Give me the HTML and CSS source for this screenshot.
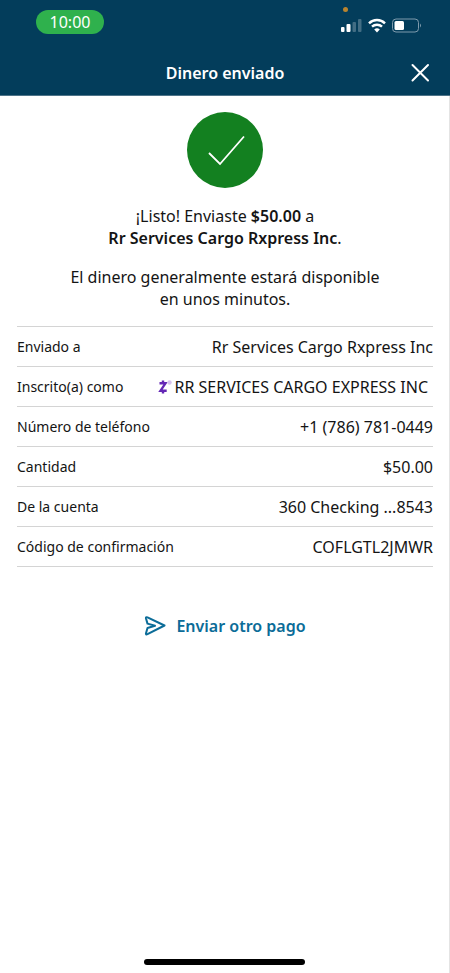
FILE: index.html
```html
<!DOCTYPE html>
<html lang="es">
<head>
<meta charset="utf-8">
<meta name="viewport" content="width=device-width, initial-scale=1">
<title>Dinero enviado</title>
<link rel="stylesheet" href="styles.css">
</head>
<body>
<header class="top">
  <div class="status">
    <span class="clock">10:00</span>
    <svg class="indicators" width="84" height="32" viewBox="0 0 84 32" aria-hidden="true">
      <circle cx="7.500" cy="5.500" r="2.500" fill="#b9842f"/>
      <g fill="#fff">
        <rect x="3" y="23" width="3.500" height="5" rx="1"/>
        <rect x="8.500" y="20" width="4" height="8" rx="1"/>
        <rect x="14.500" y="18" width="3.500" height="10" rx="1" opacity=".25"/>
        <rect x="20" y="15" width="3.500" height="13" rx="1" opacity=".25"/>
      </g>
      <g fill="none" stroke="#fff" stroke-width="2.400">
        <path d="M31 19.300a11.200 11.200 0 0 1 16 0"/>
        <path d="M34 22.700a7.200 7.200 0 0 1 10 0"/>
      </g>
      <path d="M36.200 25.600a4.200 4.200 0 0 1 5.600 0L39 28.400z" fill="#fff"/>
      <rect x="54.500" y="15" width="26" height="13" rx="3.500" fill="none" stroke="#7f9bad"/>
      <rect x="56.500" y="17" width="9.500" height="9" rx="1.500" fill="#fff"/>
      <path d="M82 19.500q2 2 0 4z" fill="#7f9bad"/>
    </svg>
  </div>
  <div class="titlebar">
    <h1>Dinero enviado</h1>
    <button class="close" type="button" aria-label="Cerrar">
      <svg width="20" height="20" viewBox="0 0 20 20" aria-hidden="true"><path d="M2.500 2l15.500 15.500M18 2L2.500 17.500" stroke="#fff" stroke-width="2" stroke-linecap="round"/></svg>
    </button>
  </div>
</header>
<main>
  <svg class="check" width="76" height="76" viewBox="0 0 76 76" aria-hidden="true">
    <circle cx="38" cy="38" r="38" fill="#138020"/>
    <path d="M22 41l11 11 24-27.500" fill="none" stroke="#fff" stroke-width="1.800"/>
  </svg>
  <p>¡Listo! Enviaste <strong>$50.00</strong> a<br><strong>Rr Services Cargo Rxpress Inc</strong>.</p>
  <p>El dinero generalmente estará disponible<br>en unos minutos.</p>
  <table>
    <tbody>
    <tr><th scope="row">Enviado a</th><td>Rr Services Cargo Rxpress Inc</td></tr>
    <tr><th scope="row">Inscrito(a) como</th><td class="enrolled"><svg class="zelle" width="14" height="16" viewBox="0 0 14 16" aria-hidden="true"><path d="M1.500 4.300h6L2.500 11.700h6.200M5 1.500v2.800M5 11.700v2.800" fill="none" stroke="#6427b5" stroke-width="2.400"/><circle cx="11.500" cy="3.500" r="2.200" fill="#d6c3ee"/></svg>RR SERVICES CARGO EXPRESS INC</td></tr>
    <tr><th scope="row">Número de teléfono</th><td>+1 (786) 781-0449</td></tr>
    <tr><th scope="row">Cantidad</th><td>$50.00</td></tr>
    <tr><th scope="row">De la cuenta</th><td>360 Checking ...8543</td></tr>
    <tr><th scope="row">Código de confirmación</th><td>COFLGTL2JMWR</td></tr>
    </tbody>
  </table>
  <button class="again" type="button">
    <svg width="22" height="20" viewBox="0 0 22 20" aria-hidden="true"><path d="M2 2.500Q1.600.7 3.500 1.400L20.500 9.500 3.500 18.200Q1.600 19 2 17.200L3.500 12 11 9.800 3.500 7.600z" fill="none" stroke="#0b6c98" stroke-width="2" stroke-linejoin="round"/></svg>
    Enviar otro pago
  </button>
</main>
<footer><div class="home"></div></footer>
</body>
</html>
```
FILE: styles.css
```css
* { box-sizing: border-box; }
body {
  margin: 0;
  min-height: 100vh;
  display: flex;
  flex-direction: column;
  background: #fff;
  color: #141414;
  font: 16px/22px "Noto Sans", sans-serif;
}
button { font: inherit; border: 0; padding: 0; background: none; cursor: pointer; }
.top { background: #033d5b; color: #fff; border-bottom: 1px solid #4d7388; }
.status {
  display: flex;
  justify-content: space-between;
  align-items: flex-start;
  height: 48px;
  padding: 4px 28px 0 36px;
}
.clock {
  margin-top: 6px;
  width: 68px;
  border-radius: 12px;
  background: #2fb14d;
  line-height: 24px;
  text-align: center;
}
.titlebar {
  display: grid;
  grid-template-columns: 20px 1fr 20px;
  align-items: center;
  height: 47px;
  padding: 2px 20px 0;
}
h1 { grid-column: 2; margin: 0; font-size: 16px; font-weight: 600; text-align: center; }
.close { display: flex; }
main {
  flex: 1;
  padding: 16px 16px 0 17px;
  border-right: 1px solid #e4e4e4;
  text-align: center;
}
.check { display: block; margin: 0 auto 17px; }
p { margin: 0 0 16px; }
p + p { margin-top: 17px; }
strong { font-weight: 600; }
table, tbody { display: block; }
table { border-top: 1px solid #d4d4d4; }
tr {
  display: flex;
  justify-content: space-between;
  align-items: center;
  height: 40px;
  border-bottom: 1px solid #d4d4d4;
}
th, td { padding: 0; white-space: nowrap; }
th { font-size: 14px; font-weight: 400; }
.enrolled { padding-right: 5px; }
.zelle { margin-right: 3px; vertical-align: -2px; }
.again {
  display: flex;
  align-items: center;
  gap: 10px;
  margin: 48px auto 0;
  color: #0b6c98;
  font-weight: 600;
}
footer { padding-bottom: 8px; border-right: 1px solid #e4e4e4; }
.home { width: 36%; height: 6px; margin: 0 auto; border-radius: 3px; background: #000; }
```
